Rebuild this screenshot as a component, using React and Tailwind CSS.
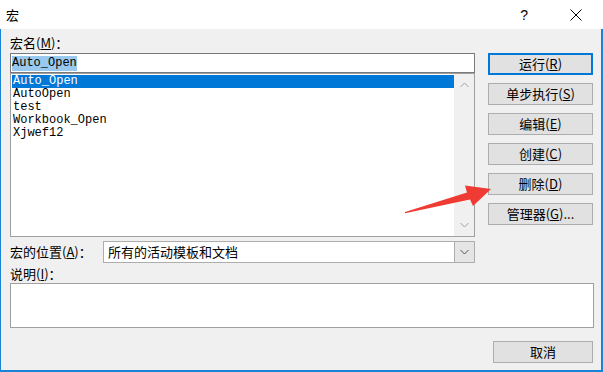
import React from 'react';

const cjk = "font-['Microsoft_YaHei','Noto_Sans_CJK_SC',sans-serif]";
const mono = "font-['Liberation_Mono','Noto_Sans_CJK_SC',monospace]";

const macros = ['Auto_Open', 'AutoOpen', 'test', 'Workbook_Open', 'Xjwef12'];

const Chevron = ({ up = false, color = '#a0a0a0' }) => (
  <svg width="9" height="6" viewBox="0 0 9 6">
    <path
      d={up ? 'M0.5 5 L4.5 1 L8.5 5' : 'M0.5 1 L4.5 5 L8.5 1'}
      fill="none"
      stroke={color}
      strokeWidth="1"
    />
  </svg>
);

const Btn = ({ children, primary = false, className = '' }) => (
  <div
    className={`h-[22px] flex items-center justify-center bg-[#e1e1e1] text-[13px] ${
      primary ? 'border-2 border-[#0078d7]' : 'border border-[#adadad]'
    } ${className}`}
  >
    {children}
  </div>
);

const App = () => {
  return (
    <div className={`relative w-[603px] h-[372px] flex flex-col overflow-hidden text-[13px] text-black ${cjk}`}>
      {/* title bar */}
      <div className="h-[29px] bg-white flex items-center pl-[6px] shrink-0">
        <span className="text-[13px] leading-none">宏</span>
        <span className="ml-auto text-[14px] leading-none mr-[42px] font-['Liberation_Sans',sans-serif]">?</span>
        <svg width="12" height="12" viewBox="0 0 12 12" className="mr-[21px]">
          <path d="M0.5 0.5 L11.5 11.5 M11.5 0.5 L0.5 11.5" stroke="#000" strokeWidth="1" />
        </svg>
      </div>

      {/* body */}
      <div className="flex-1 flex flex-col bg-[#f0f0f0] border-l border-r-2 border-b-2 border-[#1883d7] pl-[9px] pr-[7px]">
        <div className="flex">
          <div className="w-[465px] flex flex-col">
            <div className="h-[24px] flex items-center pt-[4px]">
              宏名(<u>M</u>)：
            </div>
            <div className="h-[20px] bg-white border border-[#7a7a7a] flex items-center pl-[1px]">
              <span className={`bg-[#99c9ef] leading-[15px] text-[12px] ${mono}`}>Auto_Open</span>
            </div>
            <div className="h-[164px] bg-white border border-[#a0a0a0] flex">
              <div className={`flex-1 pt-[1px] pl-[1px] ${mono} text-[12px]`}>
                {macros.map((m, i) => (
                  <div
                    key={m}
                    className={`h-[13px] leading-[13px] pl-[1px] ${i === 0 ? 'bg-[#0078d7] text-white' : ''}`}
                  >
                    {m}
                  </div>
                ))}
              </div>
              <div className="w-[20px] bg-[#f0f0f0] flex flex-col items-center justify-between py-[8px]">
                <Chevron up />
                <Chevron />
              </div>
            </div>
          </div>

          <div className="ml-[13px] w-[105px] pt-[24px] flex flex-col gap-[8px]">
            <Btn primary>运行(<u>R</u>)</Btn>
            <Btn>单步执行(<u>S</u>)</Btn>
            <Btn>编辑(<u>E</u>)</Btn>
            <Btn>创建(<u>C</u>)</Btn>
            <Btn>删除(<u>D</u>)</Btn>
            <Btn>管理器(<u>G</u>)...</Btn>
          </div>
        </div>

        <div className="mt-[4px] flex h-[22px]">
          <div className="w-[93px] flex items-center">
            宏的位置(<u>A</u>)：
          </div>
          <div className="w-[372px] bg-white border border-[#adadad] flex">
            <div className="flex-1 flex items-center pl-[4px] text-[13px]">所有的活动模板和文档</div>
            <div className="w-[20px] bg-[#e5e5e5] border-l border-[#adadad] flex items-center justify-center">
              <Chevron color="#555" />
            </div>
          </div>
        </div>

        <div className="h-[20px] flex items-center pt-[1px]">
          说明(<u>I</u>)：
        </div>
        <div className="h-[45px] bg-white border border-[#a0a0a0]" />

        <div className="mt-[13px] flex justify-end pr-[1px]">
          <Btn className="w-[100px]">取消</Btn>
        </div>
      </div>

      {/* red annotation arrow */}
      <svg className="absolute inset-0 pointer-events-none" width="603" height="372" viewBox="0 0 603 372">
        <polygon
          points="405,212 467,192.5 465,185.5 491,189 473,206 470,199.5 405,213.2"
          fill="#ef3b33"
        />
      </svg>
    </div>
  );
};

export default App;
